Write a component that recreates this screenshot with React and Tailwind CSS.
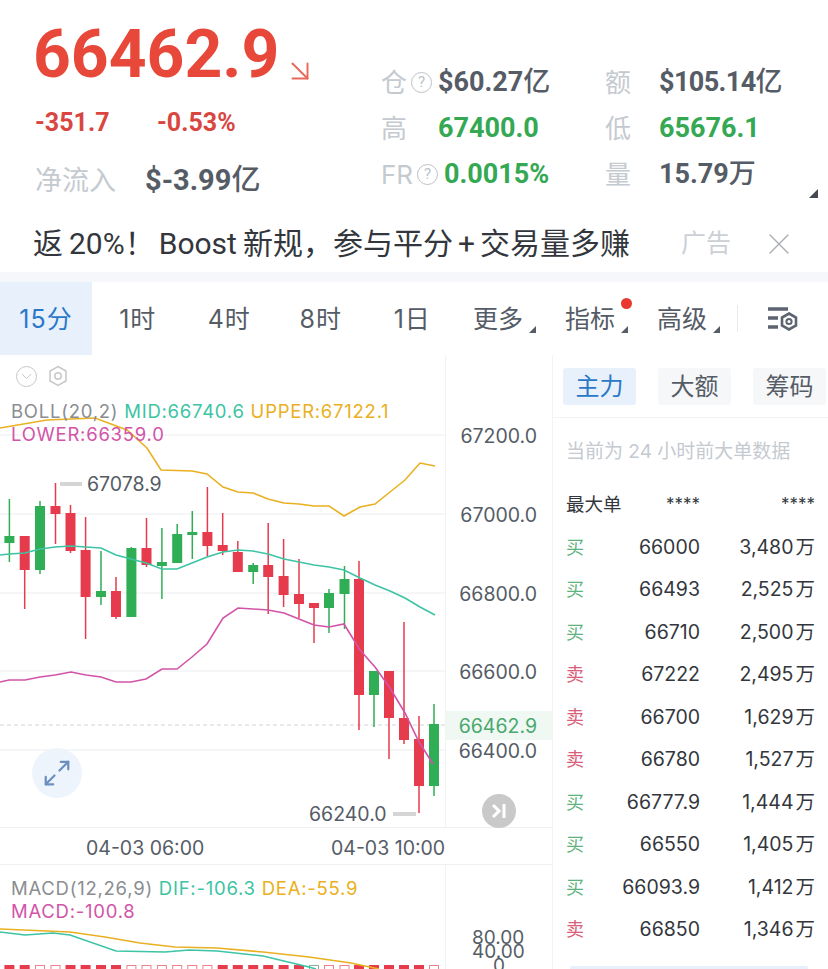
import React from 'react';
import { ArrowDownRight, ChevronDown, Maximize2, X } from 'lucide-react';

const SANS = "font-[family-name:Inter,'Noto_Sans_CJK_SC',sans-serif]";

// [x, wick top, wick bottom, body top, body bottom, up?] in page pixels
const CANDLES = [
  [9.4, 499, 562, 536, 543, 1], [24.7, 536, 609, 536, 570, 0], [40, 501, 574, 506, 570, 1],
  [55.5, 483, 544, 506, 514, 0], [70.5, 505, 553, 513, 551, 0], [85.6, 517, 639, 550, 597, 0],
  [101, 551, 605, 591, 597, 1], [116, 577, 619, 591, 617, 0], [131.4, 547, 617, 548, 617, 1],
  [146.5, 518, 567, 548, 565, 0], [161.9, 528, 599, 562, 566, 1], [177.2, 524, 563, 534, 563, 1],
  [192.3, 511, 559, 532, 535, 1], [207.4, 487, 556, 532, 546, 0], [222.7, 513, 555, 545, 551, 0],
  [237.8, 541, 572, 552, 572, 0], [253.2, 563, 584, 565, 572, 1], [268.2, 523, 614, 565, 577, 0],
  [283.6, 539, 607, 576, 595, 0], [299, 559, 618, 594, 604, 0], [314, 603, 643, 603, 608, 0],
  [329, 589, 633, 593, 608, 1], [344.5, 566, 629, 579, 594, 1], [359, 561, 730, 579, 695, 0],
  [374, 671, 727, 671, 695, 1], [389, 671, 759, 671, 718, 0], [404, 622, 744, 718, 740, 0],
  [419, 716, 813, 739, 786, 0], [434, 704, 796, 724, 786, 1],
];

const UPPER = [[0,428],[47,420],[95,418],[127,430],[147,448],[161,470],[192,471],[207,474],[223,487],[238,492],[253,493],[268,499],[284,503],[299,504],[314,506],[329,506],[344,516],[360,507],[375,504],[390,492],[405,480],[420,463],[435,466]];
const MID = [[0,555],[9,554],[25,553],[40,549],[55,547],[71,546],[86,547],[101,548],[116,555],[131,559],[146,563],[162,569],[177,569],[192,563],[207,557],[223,552],[238,550],[253,551],[268,554],[284,559],[299,562],[314,565],[329,567],[344,570],[360,578],[375,585],[390,591],[405,598],[420,607],[435,615]];
const LOWER = [[0,682],[9,680],[25,680],[40,677],[55,675],[71,672],[86,675],[101,677],[116,682],[131,682],[146,679],[162,669],[177,669],[192,657],[207,644],[223,618],[238,608],[253,609],[268,610],[284,613],[299,619],[314,625],[329,627],[344,624],[360,650],[375,667],[390,688],[405,713],[419,742],[433,764]];

const MACD_DEA = [[0,929],[70,932],[105,937],[140,943],[175,947],[217,948],[263,952],[309,957],[351,963],[379,969]];
const MACD_DIF = [[0,932],[25,935],[53,933],[70,935],[116,951],[165,952],[189,950],[217,951],[263,956],[309,967],[316,969]];
// 1 filled red, 0 hollow red, 2 grey green
const MACD_BARS = [1,1,0,0,1,1,1,1,0,0,0,0,0,0,1,1,1,1,1,1,2,0,0,1,1,1,1,1,0];

const ORDERS = [
  ['买', '66000', '3,480'], ['买', '66493', '2,525'], ['买', '66710', '2,500'], ['卖', '67222', '2,495'],
  ['卖', '66700', '1,629'], ['卖', '66780', '1,527'], ['买', '66777.9', '1,444'], ['买', '66550', '1,405'],
  ['买', '66093.9', '1,412'], ['卖', '66850', '1,346'],
];

const pts = (list) => list.map(([x, y]) => `${x},${y}`).join(' ');

function Hint() {
  return (
    <span className="flex h-[21px] w-[21px] items-center justify-center rounded-full border-[1.5px] border-[#bcc2c8] text-[15px] font-normal leading-none text-[#bcc2c8]">?</span>
  );
}

function Corner({ className }) {
  return <span className={`absolute h-0 w-0 border-b-[7px] border-l-[7px] border-b-[#555c66] border-l-transparent ${className}`} />;
}

function Stat({ label, hint, value, unit, color, valueClass = '' }) {
  return (
    <div className="flex h-[46px] items-center">
      <div className="flex w-[57px] items-center gap-[4px] text-[26px] font-normal text-[#c5cad0]">
        <span className={SANS}>{label}</span>
        {hint && <Hint />}
      </div>
      <div className={`text-[27px] font-bold leading-none ${color} ${valueClass}`}>
        {value}
        {unit && <span className="font-medium">{unit}</span>}
      </div>
    </div>
  );
}

function Header() {
  return (
    <div className="flex h-[210px] font-[family-name:Roboto,'Noto_Sans_CJK_SC',sans-serif]">
      <div className="w-[381px] pl-[35px] pt-[16px]">
        <div className="flex h-[76px] items-center">
          <span className="ml-[-2px] mt-[1px] text-[66px] font-bold leading-none text-[#e8483a]">66462.9</span>
          <ArrowDownRight className="ml-[3px] mt-[34px] h-[36px] w-[36px] text-[#e8695c]" strokeWidth={1.3} />
        </div>
        <div className="mt-[12px] flex text-[25px] font-bold leading-[38px] text-[#d9463f]">
          <span className="w-[122px]">-351.7</span>
          <span>-0.53%</span>
        </div>
        <div className="mt-[17px] flex items-center">
          <span className={`w-[110px] text-[27px] text-[#c5cad0] ${SANS}`}>净流入</span>
          <span className="text-[29px] font-bold text-[#555c66]">$-3.99<span className="font-medium">亿</span></span>
        </div>
      </div>
      <div className="relative flex flex-1 pt-[59px]">
        <div className="w-[224px]">
          <Stat label="仓" hint value="$60.27" unit="亿" color="text-[#555c66]" />
          <Stat label="高" value="67400.0" color="text-[#34a853]" />
          <Stat label="FR" hint value="0.0015%" color="text-[#34a853]" valueClass="ml-[6px]" />
        </div>
        <div className="[&>div>div:first-child]:w-[54px]">
          <Stat label="额" value="$105.14" unit="亿" color="text-[#555c66]" valueClass="tracking-[-0.6px]" />
          <Stat label="低" value="65676.1" color="text-[#34a853]" />
          <Stat label="量" value="15.79" unit="万" color="text-[#555c66]" valueClass="whitespace-nowrap" />
        </div>
        <span className="absolute right-[10px] top-[189px] h-0 w-0 border-b-[9px] border-l-[9px] border-b-[#454a52] border-l-transparent" />
      </div>
    </div>
  );
}

function AdBar() {
  return (
    <div className="flex h-[62px] items-center pl-[33px] pt-[5px] font-[family-name:Roboto,'Noto_Sans_CJK_SC',sans-serif]">
      <span className="w-[648px] whitespace-nowrap text-[30px] leading-none text-[#33373d]">
        返<span className="ml-[6px]">20%！</span><span className="ml-[4px]">Boost</span><span className="ml-[6px]">新规，参与平分</span><span className="mx-[5px]">+</span>交易量多赚
      </span>
      <span className={`w-[80px] text-[25px] text-[#ccd0d5] ${SANS}`}>广告</span>
      <X className="h-[36px] w-[36px] text-[#a9adb3]" strokeWidth={0.9} />
    </div>
  );
}

function TabItem({ children, width = 'w-[91.5px] tracking-[1px]', caret, dot }) {
  return (
    <div className={`relative flex h-full items-center justify-center pt-[2px] text-[25px] text-[#555c66] ${width}`}>
      {children}
      {caret && <Corner className="right-[0px] top-[44px]" />}
      {dot && <span className="absolute right-[-4px] top-[16px] h-[11px] w-[11px] rounded-full bg-[#e8382f]" />}
    </div>
  );
}

function Tabs() {
  return (
    <div className={`flex h-[73px] items-center ${SANS}`}>
      <div className="flex h-full w-[92px] items-center justify-center bg-[#e8f1fb] pt-[2px] text-[25px] tracking-[1px] text-[#2a78c8]">15分</div>
      <TabItem>1时</TabItem>
      <TabItem>4时</TabItem>
      <TabItem>8时</TabItem>
      <TabItem>1日</TabItem>
      <div className="flex h-full w-[280px] pl-[15px]">
        <TabItem width="w-[63px] mr-[29px] justify-start" caret>更多</TabItem>
        <TabItem width="w-[63px] mr-[29px] justify-start" caret dot>指标</TabItem>
        <TabItem width="w-[63px] justify-start" caret>高级</TabItem>
      </div>
      <div className="ml-[-1px] h-[27px] w-px bg-[#e8eaed]" />
      <svg className="ml-[29px]" width="31" height="26" viewBox="0 0 31 26" fill="none">
        <path d="M1 3h20M1 12h10M1 21h10" stroke="#5b6470" strokeWidth="3.4" />
        <path d="M22 7.5l7 4v8l-7 4-7-4v-8z" stroke="#5b6470" strokeWidth="2.6" />
        <circle cx="22" cy="15.5" r="2.6" stroke="#5b6470" strokeWidth="2" />
      </svg>
    </div>
  );
}

function CandleSvg() {
  return (
    <svg className="absolute left-0 top-0" width="445" height="473" viewBox="0 355 445 473" fill="none">
      {[435, 514, 593, 671, 750].map((y) => (
        <line key={y} x1="0" x2="445" y1={y} y2={y} stroke="#f2f3f5" strokeWidth="1.4" />
      ))}
      <line x1="0" x2="445" y1="725" y2="725" stroke="#cfd2d6" strokeWidth="1" strokeDasharray="4 3" />
      {CANDLES.map(([x, wt, wb, bt, bb, up], i) => {
        const c = up ? '#2fae55' : '#e63b4c';
        return (
          <g key={i}>
            <line x1={x} x2={x} y1={wt} y2={wb} stroke={c} strokeWidth="1.5" />
            <rect x={x - 5} y={bt} width="10" height={bb - bt} fill={c} />
          </g>
        );
      })}
      <polyline points={pts(UPPER)} stroke="#e9b021" strokeWidth="1.6" />
      <polyline points={pts(MID)} stroke="#3cc4a4" strokeWidth="1.6" />
      <polyline points={pts(LOWER)} stroke="#d254a8" strokeWidth="1.6" />
    </svg>
  );
}

function MainChart() {
  return (
    <div className="relative flex h-[473px] border-b border-[#eff0f2]">
      <div className="relative w-[446px] border-r border-[#f2f3f5]">
        <CandleSvg />
        <div className="absolute left-[16px] top-[10px] flex items-center gap-[11px] text-[#c4c4c4]">
          <ChevronDown className="h-[21px] w-[21px] rounded-full border-[1.5px] border-[#c8c8c8] p-[1px]" strokeWidth={1.4} />
          <svg width="20" height="22" viewBox="0 0 20 22" fill="none" stroke="#c8c8c8" strokeWidth="1.5">
            <path d="M10 1.5l8 4.5v10l-8 4.5-8-4.5V6z" />
            <circle cx="10" cy="11" r="3.2" />
          </svg>
        </div>
        <div className="absolute left-[11px] top-[45px] w-[430px] text-[18.5px] leading-[23px] tracking-[0.75px]">
          <span className="text-[#8a8d91]">BOLL(20,2) </span>
          <span className="text-[#3cc4a4]">MID:66740.6 </span>
          <span className="text-[#e9b021]">UPPER:67122.1</span>
          <div className="text-[#d254a8]">LOWER:66359.0</div>
        </div>
        <div className="absolute left-[60px] top-[118px] flex items-center gap-[5px] text-[19.5px] leading-[22px] text-[#555c66]">
          <span className="h-[4px] w-[22px] bg-[#d5d5d5]" />
          67078.9
        </div>
        <div className="absolute left-[309px] top-[448px] flex items-center gap-[6px] text-[19.5px] leading-[22px] text-[#555c66]">
          66240.0
          <span className="h-[4px] w-[23px] bg-[#d5d5d5]" />
        </div>
        <div className="absolute left-[32px] top-[393px] flex h-[50px] w-[50px] items-center justify-center rounded-full bg-[#eef4fb]">
          <Maximize2 className="h-[30px] w-[30px] text-[#6d8fbf]" strokeWidth={1.8} />
        </div>
      </div>
      <div className="relative flex-1 text-[19.5px] leading-[22px] text-[#555c66]">
        {[['67200.0', 70], ['67000.0', 149], ['66800.0', 228], ['66600.0', 306], ['66400.0', 385]].map(([t, top]) => (
          <span key={t} style={{ top }} className="absolute right-[15px]">{t}</span>
        ))}
        <div className="absolute left-0 right-0 top-[356px] flex h-[29px] items-center justify-end bg-[#f0f8f3] pr-[15px] text-[#4aa86f]">66462.9</div>
        <div className="absolute left-[36px] top-[439px] flex h-[34px] w-[34px] items-center justify-center rounded-full bg-[#c9c9c9]">
          <svg width="18" height="16" viewBox="0 0 18 16" fill="none" stroke="#fff" strokeWidth="3">
            <path d="M3 2l6 6-6 6" />
            <path d="M14 1v14" />
          </svg>
        </div>
      </div>
    </div>
  );
}

function MacdPanel() {
  return (
    <div className="relative flex h-[104px] overflow-hidden">
      <div className="relative w-[446px] border-r border-[#f2f3f5]">
        <svg className="absolute left-0 top-0" width="445" height="104" viewBox="0 865 445 104" fill="none">
          {CANDLES.map(([x], i) => (
            MACD_BARS[i] === 1
              ? <rect key={i} x={x - 5} y="965" width="10" height="6" fill="#e63b4c" />
              : <rect key={i} x={x - 4.5} y="965.5" width="9" height="6" stroke={MACD_BARS[i] === 2 ? '#8fae9c' : '#e8828c'} />
          ))}
          <polyline points={pts(MACD_DIF)} stroke="#3cc4a4" strokeWidth="1.6" />
          <polyline points={pts(MACD_DEA)} stroke="#e9b021" strokeWidth="1.6" />
        </svg>
        <div className="absolute left-[11px] top-[12px] w-[430px] text-[18.5px] leading-[23px] tracking-[0.75px]">
          <span className="text-[#8a8d91]">MACD(12,26,9) </span>
          <span className="text-[#3cc4a4]">DIF:-106.3 </span>
          <span className="text-[#e9b021]">DEA:-55.9</span>
          <div className="text-[#d254a8]">MACD:-100.8</div>
        </div>
      </div>
      <div className="relative flex-1 text-center text-[19px] leading-[22px] text-[#555c66]">
        <span className="absolute left-[26px] top-[62px]">80.00</span>
        <span className="absolute left-[26px] top-[76px]">40.00</span>
        <span className="absolute left-[47px] top-[90px]">0</span>
      </div>
    </div>
  );
}

function SideTab({ children, active }) {
  return (
    <div className={`flex h-[37px] w-[73px] items-center justify-center rounded-[3px] text-[24px] ${active ? 'bg-[#e8f1fb] text-[#2a78c8]' : 'bg-[#f6f7f9] text-[#555c66]'}`}>
      {children}
    </div>
  );
}

function OrderRow({ side, price, amount }) {
  return (
    <div className="flex h-[42.5px] items-center text-[19.5px] text-[#33373d]">
      <span className={`w-[34px] text-[18px] ${side === '买' ? 'text-[#5db27d]' : 'text-[#d9607a]'}`}>{side}</span>
      <span className="w-[100px] text-right">{price}</span>
      <span className="w-[115px] text-right">{amount}<span className="ml-[2px]">万</span></span>
    </div>
  );
}

function SidePanel() {
  return (
    <div className="relative flex-1 overflow-hidden">
      <div className="flex h-[63px] gap-[22px] border-b border-[#f2f3f5] pl-[10px] pt-[13px]">
        <SideTab active>主力</SideTab>
        <SideTab>大额</SideTab>
        <SideTab>筹码</SideTab>
      </div>
      <div className="pl-[13px] pt-[1px]">
        <div className="flex h-[66px] items-center text-[19px] text-[#c5cad0]">当前为 24 小时前大单数据</div>
        <div className="flex h-[40px] items-center text-[19px] text-[#33373d]">
          <span className="w-[72px] whitespace-nowrap text-[18.5px]">最大单</span>
          <span className="w-[62px] text-right text-[17px]">****</span>
          <span className="w-[115px] text-right text-[17px]">****</span>
        </div>
        <div className="pt-[1px]">
          {ORDERS.map(([side, price, amount]) => (
            <OrderRow key={price} side={side} price={price} amount={amount} />
          ))}
        </div>
      </div>
      <div className="absolute bottom-0 left-[17px] h-[3px] w-[238px] rounded-t-[2px] bg-[#e8f0fb]" />
    </div>
  );
}

export default function App() {
  return (
    <div className={`h-[969px] w-[828px] overflow-hidden bg-white ${SANS}`}>
      <Header />
      <AdBar />
      <div className="h-[10px] bg-[#f5f7fa]" />
      <Tabs />
      <div className="flex h-[614px]">
        <div className="w-[553px] shrink-0 border-r border-[#f2f3f5]">
          <MainChart />
          <div className="relative h-[37px] border-b border-[#eff0f2] text-[19.5px] leading-[40px] text-[#555c66]">
            <span className="absolute left-[86px]">04-03 06:00</span>
            <span className="absolute left-[331px]">04-03 10:00</span>
          </div>
          <MacdPanel />
        </div>
        <SidePanel />
      </div>
    </div>
  );
}
